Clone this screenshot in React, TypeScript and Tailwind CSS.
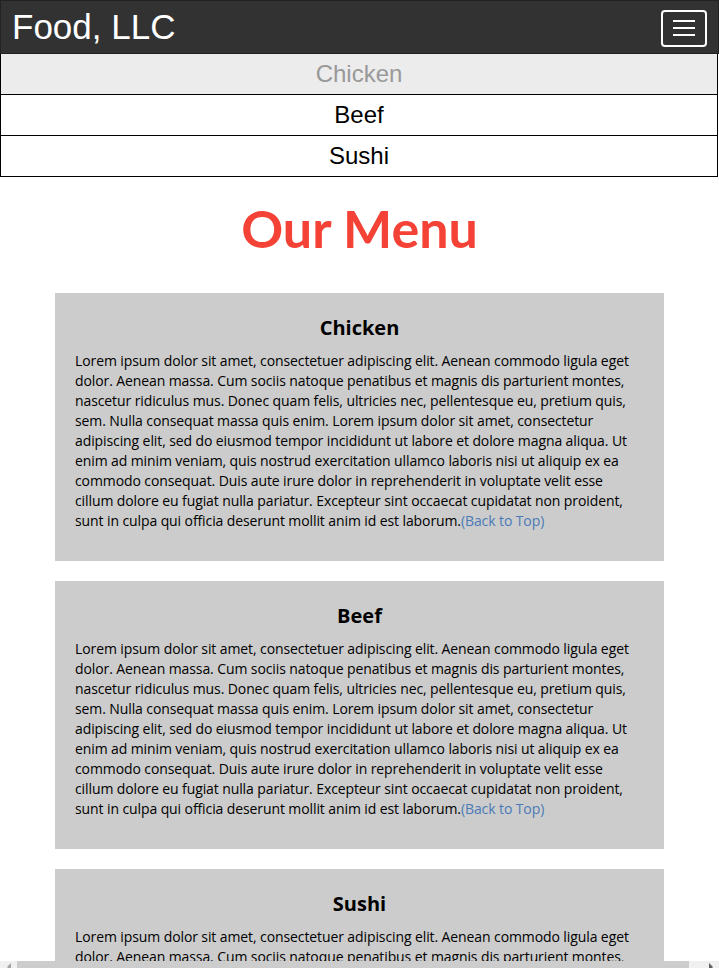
import React from "react";

const LINES = [
  "Lorem ipsum dolor sit amet, consectetuer adipiscing elit. Aenean commodo ligula eget",
  "dolor. Aenean massa. Cum sociis natoque penatibus et magnis dis parturient montes,",
  "nascetur ridiculus mus. Donec quam felis, ultricies nec, pellentesque eu, pretium quis,",
  "sem. Nulla consequat massa quis enim. Lorem ipsum dolor sit amet, consectetur",
  "adipiscing elit, sed do eiusmod tempor incididunt ut labore et dolore magna aliqua. Ut",
  "enim ad minim veniam, quis nostrud exercitation ullamco laboris nisi ut aliquip ex ea",
  "commodo consequat. Duis aute irure dolor in reprehenderit in voluptate velit esse",
  "cillum dolore eu fugiat nulla pariatur. Excepteur sint occaecat cupidatat non proident,",
  "sunt in culpa qui officia deserunt mollit anim id est laborum.",
];

function Card({ title }: { title: string }) {
  return (
    <section className="bg-[#cccccc] px-5 pt-[21px] pb-[30px]">
      <h3 className="text-center text-[20px] leading-[28px] font-bold text-black">{title}</h3>
      <p className="mt-[9px] text-[14px] leading-[20px] text-black whitespace-nowrap tracking-[-0.1px]">
        {LINES.map((l, i) => (
          <React.Fragment key={i}>
            {l}
            {i === LINES.length - 1 ? (
              <a href="#" className="text-[#4a7ab8]">(Back to Top)</a>
            ) : (
              <br />
            )}
          </React.Fragment>
        ))}
      </p>
    </section>
  );
}

export default function App() {
  return (
    <div className="min-h-[968px] bg-white" style={{ fontFamily: '"Liberation Sans", Arial, sans-serif' }}>
      <header className="h-[54px] bg-[#323232] flex items-center justify-between pl-[11px] pr-[11px] border border-[#222]">
        <span className="text-white text-[35px] leading-none -mt-[1px]">Food, LLC</span>
        <button className="w-[46px] h-[37px] border-2 border-white rounded-[4px] flex flex-col items-center justify-center gap-[5px] mt-[2px]">
          <span className="block w-[22px] h-[2px] bg-white" />
          <span className="block w-[22px] h-[2px] bg-white" />
          <span className="block w-[22px] h-[2px] bg-white" />
        </button>
      </header>
      <nav className="text-[24px]">
        <div className="h-[41px] flex items-center justify-center bg-[#ececec] text-[#999] border-l border-r border-b border-black mr-[1px]">Chicken</div>
        <div className="h-[41px] flex items-center justify-center bg-white text-black border-l border-r border-b border-black mr-[1px]">Beef</div>
        <div className="h-[41px] flex items-center justify-center bg-white text-black border-l border-r border-b border-black mr-[1px]">Sushi</div>
      </nav>
      <main style={{ fontFamily: '"Comic Sans MS", "Open Sans", sans-serif' }}>
        <h1 className="text-center text-[52px] leading-[60px] font-bold text-[#f44336] mt-[21px] mb-[35px]" style={{ fontFamily: '"Comic Sans MS", Lato, sans-serif' }}>
          Our Menu
        </h1>
        <div className="mx-[55px] flex flex-col gap-5">
          <Card title="Chicken" />
          <Card title="Beef" />
          <Card title="Sushi" />
        </div>
      </main>
      <div className="fixed left-0 right-0 bottom-0 h-[7px] bg-[#f0f0f0] flex items-start">
        <div className="w-[17px] flex justify-center pt-[2px]">
          <div className="w-0 h-0 border-t-[4px] border-b-[4px] border-r-[4px] border-t-transparent border-b-transparent border-r-[#a3a3a3]" />
        </div>
        <div className="flex-1 h-[7px] bg-[#cdcdcd] mr-[13px]" />
        <div className="w-[17px] flex justify-center pt-[2px]">
          <div className="w-0 h-0 border-t-[4px] border-b-[4px] border-l-[4px] border-t-transparent border-b-transparent border-l-[#606060]" />
        </div>
      </div>
    </div>
  );
}
